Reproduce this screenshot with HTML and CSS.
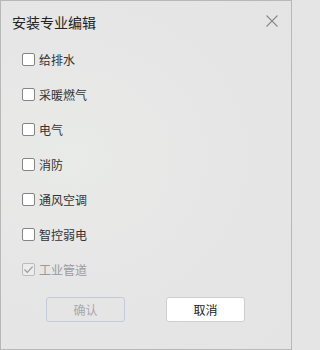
FILE: index.html
```html
<!DOCTYPE html>
<html lang="zh-CN">
<head>
<meta charset="utf-8">
<link rel="stylesheet" href="styles.css">
</head>
<body>
<div class="dialog">
  <div class="header">
    <span class="title">安装专业编辑</span>
    <span class="close">
      <svg width="12" height="12" viewBox="0 0 12 12"><path d="M0.5 0.5 L11.5 11.5 M11.5 0.5 L0.5 11.5" stroke="#8a8a8a" stroke-width="1.1" fill="none"/></svg>
    </span>
  </div>
  <div class="list">
    <label class="row"><span class="box"></span><span class="text">给排水</span></label>
    <label class="row"><span class="box"></span><span class="text">采暖燃气</span></label>
    <label class="row"><span class="box"></span><span class="text">电气</span></label>
    <label class="row"><span class="box"></span><span class="text">消防</span></label>
    <label class="row"><span class="box"></span><span class="text">通风空调</span></label>
    <label class="row"><span class="box"></span><span class="text">智控弱电</span></label>
    <label class="row disabled"><span class="box checked"><svg width="11" height="11" viewBox="0 0 11 11"><path d="M1.5 5.5 L4.3 8.3 L9.6 2.6" stroke="#9a9a9a" stroke-width="1.2" fill="none"/></svg></span><span class="text">工业管道</span></label>
  </div>
  <div class="actions">
    <button class="btn btn-disabled">确认</button>
    <button class="btn btn-cancel">取消</button>
  </div>
</div>
</body>
</html>
```
FILE: styles.css
```css
html, body {
  margin: 0;
  padding: 0;
  background: #e5e5e5;
}
body {
  font-family: "Noto Sans CJK SC", "Microsoft YaHei", sans-serif;
}
.dialog {
  width: 292px;
  height: 350px;
  box-sizing: border-box;
  border: 1px solid #b8b8b8;
  background: radial-gradient(ellipse at 25% 45%, #e9ebe8 0%, #e6e6e6 45%, #e4e4e4 100%);
  display: flex;
  flex-direction: column;
}
.header {
  height: 41px;
  display: flex;
  align-items: center;
  justify-content: space-between;
  padding: 0 13px 0 11px;
  box-sizing: border-box;
}
.title {
  font-size: 14px;
  color: #222;
  line-height: 16px;
}
.close {
  display: flex;
  width: 12px;
  height: 12px;
  margin-top: -1px;
}
.list {
  display: flex;
  flex-direction: column;
  padding-left: 21px;
}
.row {
  height: 35px;
  display: flex;
  align-items: center;
  gap: 4px;
}
.box {
  width: 13px;
  height: 13px;
  box-sizing: border-box;
  border: 1px solid #858585;
  border-radius: 2px;
  background: #fff;
  display: flex;
  align-items: center;
  justify-content: center;
}
.box.checked {
  border-color: #bcbcbc;
  background: #ececec;
}
.text {
  font-size: 12px;
  color: #333;
  line-height: 14px;
}
.disabled .text {
  color: #9b9b9b;
}
.actions {
  display: flex;
  justify-content: center;
  gap: 41px;
  margin-top: 10px;
  padding-right: 1px;
}
.btn {
  width: 79px;
  height: 25px;
  box-sizing: border-box;
  border-radius: 3px;
  font-family: "Noto Sans CJK SC", "Microsoft YaHei", sans-serif;
  font-size: 12px;
  padding: 0;
}
.btn-disabled {
  border: 1px solid #c5cad8;
  background: #e5e5e5;
  color: #a9a9a9;
}
.btn-cancel {
  border: 1px solid #cfcfcf;
  background: #fff;
  color: #222;
}
```
